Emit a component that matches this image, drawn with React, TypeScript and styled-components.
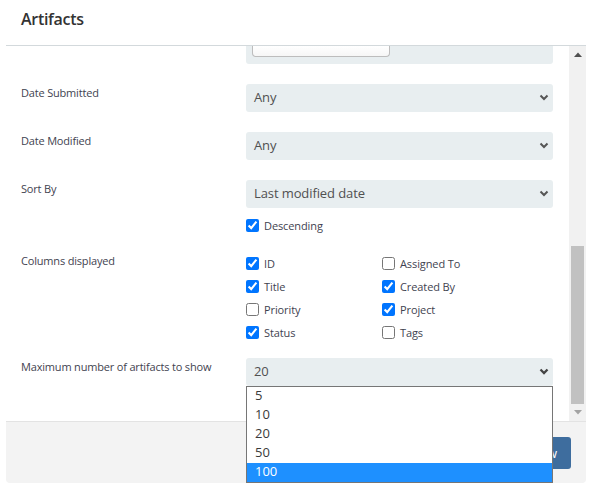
import React from "react";
import styled, { createGlobalStyle } from "styled-components";

const GlobalStyle = createGlobalStyle`
  html, body { margin: 0; padding: 0; background: #ffffff; }
  body { font-family: "Open Sans", "Noto Sans", sans-serif; }
  * { box-sizing: border-box; }
`;

const Modal = styled.div`
  margin-left: 6px;
  width: 580px;
  display: flex;
  flex-direction: column;
`;

const Header = styled.div`
  height: 46px;
  border-bottom: 1px solid #d3d9dc;
  padding: 8px 0 0 15px;
`;

const Title = styled.h1`
  margin: 0;
  font-size: 16px;
  line-height: 22px;
  font-weight: 600;
  letter-spacing: -0.3px;
  color: #333333;
`;

const Body = styled.div`
  display: flex;
  height: 375px;
`;

const Content = styled.div`
  flex: 1;
  padding-left: 15px;
`;

const FormRow = styled.div<{ $mb: number }>`
  display: flex;
  align-items: flex-start;
  margin-bottom: ${(p) => p.$mb}px;
`;

const Label = styled.div`
  width: 225px;
  font-size: 11px;
  line-height: 18px;
  letter-spacing: -0.18px;
  color: #3f4350;
`;

const Control = styled.div`
  width: 307px;
  position: relative;
  display: flex;
  flex-direction: column;
`;

const PanelTail = styled.div`
  height: 18px;
  background: #e8eef0;
  border-radius: 0 0 3px 3px;
  padding-left: 6px;
`;

const InputTail = styled.div`
  width: 138px;
  height: 11px;
  background: linear-gradient(#ffffff, #f6f6f6);
  border: 1px solid #bdbdbd;
  border-top: none;
  border-radius: 0 0 4px 4px;
`;

const Select = styled.div`
  height: 28px;
  background: #e8eef0;
  border-radius: 3px;
  display: flex;
  align-items: center;
  justify-content: space-between;
  padding: 0 4px 2px 8px;
  font-size: 13px;
  line-height: 17px;
  letter-spacing: -0.1px;
  color: #505050;
`;

const Chevron = ({ bold }: { bold?: boolean }) => (
  <svg width="10" height="7" viewBox="0 0 10 7">
    <polyline
      points="1.5,1.5 5,5 8.5,1.5"
      fill="none"
      stroke={bold ? "#444" : "#555"}
      strokeWidth={bold ? 2.3 : 2}
    />
  </svg>
);

const CheckLine = styled.label`
  height: 23px;
  display: flex;
  align-items: center;
  gap: 5px;
  font-size: 11px;
  letter-spacing: -0.1px;
  color: #3f4350;
`;

const Box = styled.input`
  margin: 0;
  width: 13px;
  height: 13px;
  accent-color: #0075ff;
`;

const DescLine = styled(CheckLine)`
  margin-top: 6px;
`;

const CheckGrid = styled.div`
  display: grid;
  grid-template-columns: 136px 136px;
  grid-auto-rows: 23px;
`;

const OptionList = styled.div`
  position: absolute;
  top: 28px;
  left: 0;
  width: 307px;
  background: #ffffff;
  border: 1px solid #767676;
  z-index: 10;
`;

const Option = styled.div<{ $active?: boolean }>`
  height: 19px;
  line-height: 17px;
  padding-left: 8px;
  font-size: 13px;
  color: ${(p) => (p.$active ? "#ffffff" : "#3a3a3a")};
  background: ${(p) => (p.$active ? "#1e90ff" : "transparent")};
`;

const Scrollbar = styled.div`
  width: 17px;
  background: #f1f1f1;
  display: flex;
  flex-direction: column;
`;

const ArrowBtn = styled.div`
  height: 17px;
  display: flex;
  align-items: center;
  justify-content: center;
`;

const Track = styled.div`
  flex: 1;
  display: flex;
  flex-direction: column;
  justify-content: flex-end;
  padding: 0 2px;
`;

const Thumb = styled.div`
  height: 158px;
  background: #c1c1c1;
`;

const Footer = styled.div`
  height: 62px;
  background: #f3f3f3;
  border-top: 1px solid #e3e3e3;
  border-radius: 0 0 4px 4px;
  display: flex;
  justify-content: flex-end;
  align-items: flex-start;
  padding: 15px 15px 0 0;
`;

const PrimaryButton = styled.button`
  height: 32px;
  padding: 0 14px;
  border: none;
  border-radius: 3px;
  background: #3e6d9e;
  color: #ffffff;
  font-family: "Open Sans", "Noto Sans", sans-serif;
  font-size: 13px;
`;

const columns = [
  { name: "ID", on: true },
  { name: "Assigned To", on: false },
  { name: "Title", on: true },
  { name: "Created By", on: true },
  { name: "Priority", on: false },
  { name: "Project", on: true },
  { name: "Status", on: true },
  { name: "Tags", on: false },
];

const counts = ["5", "10", "20", "50", "100"];

export default function App() {
  return (
    <>
      <GlobalStyle />
      <Modal>
        <Header>
          <Title>Artifacts</Title>
        </Header>
        <Body>
          <Content>
            <FormRow $mb={20}>
              <Label />
              <Control>
                <PanelTail>
                  <InputTail />
                </PanelTail>
              </Control>
            </FormRow>
            <FormRow $mb={20}>
              <Label>Date Submitted</Label>
              <Control>
                <Select>
                  <span>Any</span>
                  <Chevron />
                </Select>
              </Control>
            </FormRow>
            <FormRow $mb={20}>
              <Label>Date Modified</Label>
              <Control>
                <Select>
                  <span>Any</span>
                  <Chevron />
                </Select>
              </Control>
            </FormRow>
            <FormRow $mb={15}>
              <Label>Sort By</Label>
              <Control>
                <Select>
                  <span>Last modified date</span>
                  <Chevron />
                </Select>
                <DescLine>
                  <Box type="checkbox" checked readOnly />
                  Descending
                </DescLine>
              </Control>
            </FormRow>
            <FormRow $mb={14}>
              <Label>Columns displayed</Label>
              <Control>
                <CheckGrid>
                  {columns.map((c) => (
                    <CheckLine key={c.name}>
                      <Box type="checkbox" checked={c.on} readOnly />
                      {c.name}
                    </CheckLine>
                  ))}
                </CheckGrid>
              </Control>
            </FormRow>
            <FormRow $mb={0}>
              <Label>Maximum number of artifacts to show</Label>
              <Control>
                <Select>
                  <span>20</span>
                  <Chevron bold />
                </Select>
                <OptionList>
                  {counts.map((n) => (
                    <Option key={n} $active={n === "100"}>
                      {n}
                    </Option>
                  ))}
                </OptionList>
              </Control>
            </FormRow>
          </Content>
          <Scrollbar>
            <ArrowBtn>
              <svg width="8" height="5" viewBox="0 0 8 5">
                <polygon points="0,5 4,0.5 8,5" fill="#505050" />
              </svg>
            </ArrowBtn>
            <Track>
              <Thumb />
            </Track>
            <ArrowBtn>
              <svg width="8" height="5" viewBox="0 0 8 5">
                <polygon points="0,0 8,0 4,4.5" fill="#a3a3a3" />
              </svg>
            </ArrowBtn>
          </Scrollbar>
        </Body>
        <Footer>
          <PrimaryButton>Show</PrimaryButton>
        </Footer>
      </Modal>
    </>
  );
}
